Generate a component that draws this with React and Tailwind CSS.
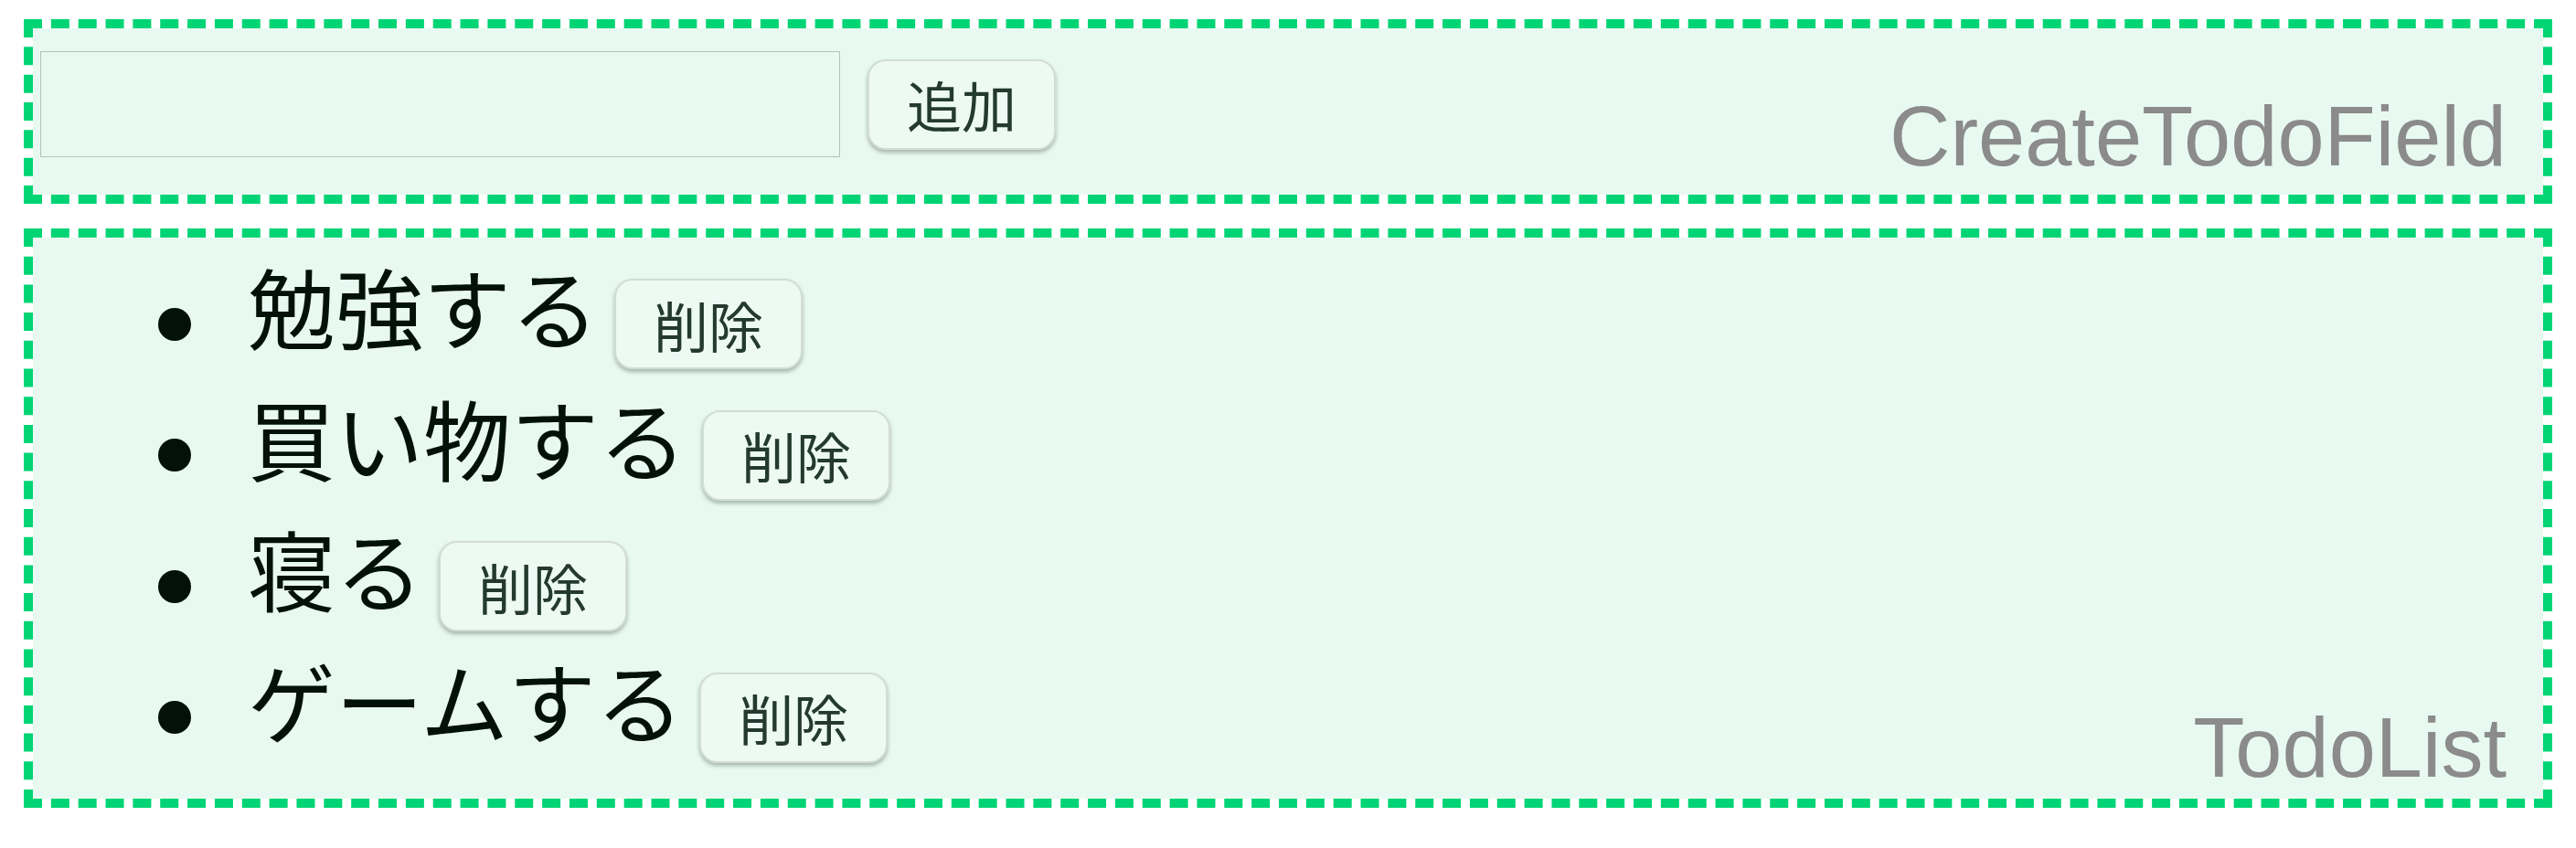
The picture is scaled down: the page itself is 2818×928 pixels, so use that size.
import React from "react";

const todos = ["勉強する", "買い物する", "寝る", "ゲームする"];

function Btn({ children }) {
  return (
    <button
      type="button"
      className="flex h-[99px] w-[206px] shrink-0 items-center justify-center rounded-[20px] border-2 border-[#d2ddd7] bg-[#edfaf4] font-['Noto_Sans_CJK_JP',sans-serif] text-[60px] leading-none text-[#243a2f] shadow-[0_3px_4px_rgba(40,60,50,0.35)]"
    >
      {children}
    </button>
  );
}

export default function App() {
  return (
    <div className="min-h-[928px] w-full bg-white">
      <div className="flex flex-col gap-[27px] px-[26px] pt-[21px]">
        <section className="relative h-[202px] border-[10px] border-dashed border-[#00d474] bg-[#e8f9f1] bg-clip-padding pl-[8px] pt-[25px]">
          <div className="flex items-center gap-[30px]">
            <input
              type="text"
              className="h-[116px] w-[875px] border border-[#b3c3bb] bg-transparent outline-none"
            />
            <Btn>追加</Btn>
          </div>
          <span className="absolute bottom-[18px] right-[40px] font-['Liberation_Sans',Arial,sans-serif] text-[92px] leading-none text-[#8b8b8b]">
            CreateTodoField
          </span>
        </section>

        <section className="relative h-[634px] border-[10px] border-dashed border-[#00d474] bg-[#e8f9f1] bg-clip-padding pt-[23px]">
          <ul className="flex flex-col">
            {todos.map((t) => (
              <li key={t} className="flex h-[143.5px] items-center pl-[137px]">
                <span className="h-[36px] w-[36px] shrink-0 rounded-full bg-[#021208]" />
                <span className="mb-[23px] ml-[62px] font-['Liberation_Serif','Noto_Sans_CJK_JP',serif] text-[96px] leading-none text-[#021208]">
                  {t}
                </span>
                <span className="ml-[17px]">
                  <Btn>削除</Btn>
                </span>
              </li>
            ))}
          </ul>
          <span className="absolute bottom-[10px] right-[40px] font-['Liberation_Sans',Arial,sans-serif] text-[92px] leading-none text-[#8b8b8b]">
            TodoList
          </span>
        </section>
      </div>
    </div>
  );
}
